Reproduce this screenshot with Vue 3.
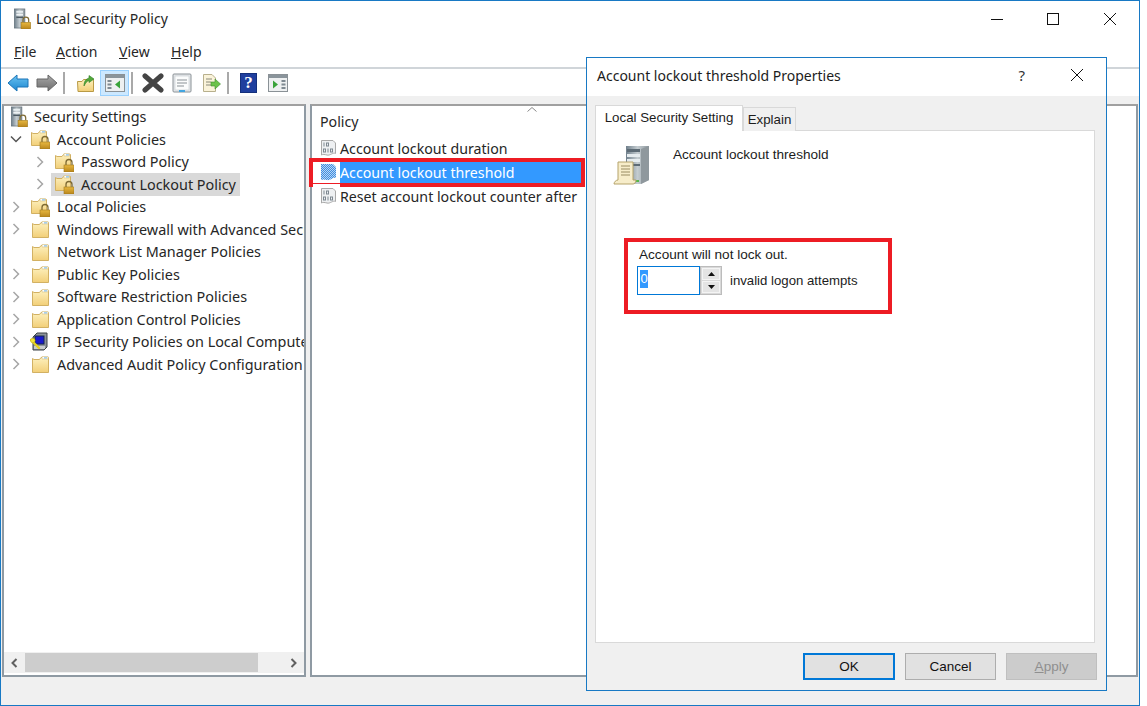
<script setup>
const tree = [
  { label: 'Security Settings', lv: 0, icon: 'i-server-lock' },
  { label: 'Account Policies', lv: 1, icon: 'i-folder-lock', chev: 'open' },
  { label: 'Password Policy', lv: 2, icon: 'i-folder-lock', chev: 'closed' },
  { label: 'Account Lockout Policy', lv: 2, icon: 'i-folder-lock', chev: 'closed', selected: true },
  { label: 'Local Policies', lv: 1, icon: 'i-folder-lock', chev: 'closed' },
  { label: 'Windows Firewall with Advanced Security', lv: 1, icon: 'i-folder', chev: 'closed' },
  { label: 'Network List Manager Policies', lv: 1, icon: 'i-folder' },
  { label: 'Public Key Policies', lv: 1, icon: 'i-folder', chev: 'closed' },
  { label: 'Software Restriction Policies', lv: 1, icon: 'i-folder', chev: 'closed' },
  { label: 'Application Control Policies', lv: 1, icon: 'i-folder', chev: 'closed' },
  { label: 'IP Security Policies on Local Computer', lv: 1, icon: 'i-ipsec', chev: 'closed' },
  { label: 'Advanced Audit Policy Configuration', lv: 1, icon: 'i-folder', chev: 'closed' }
]
const policies = [
  { label: 'Account lockout duration' },
  { label: 'Account lockout threshold', selected: true },
  { label: 'Reset account lockout counter after' }
]
const menus = [
  { key: 'F', rest: 'ile' },
  { key: 'A', rest: 'ction' },
  { key: 'V', rest: 'iew' },
  { key: 'H', rest: 'elp' }
]
</script>

<template>
  <div class="screen">
    <svg class="defs" aria-hidden="true">
      <defs>
        <linearGradient id="g-folder" x1="0" y1="0" x2="0" y2="1">
          <stop offset="0" stop-color="#fdf0bd" />
          <stop offset="1" stop-color="#f2cf78" />
        </linearGradient>
        <linearGradient id="g-lock" x1="0" y1="0" x2="0" y2="1">
          <stop offset="0" stop-color="#e8b840" />
          <stop offset="1" stop-color="#b9861c" />
        </linearGradient>
        <linearGradient id="g-tower" x1="0" y1="0" x2="1" y2="0">
          <stop offset="0" stop-color="#70808c" />
          <stop offset="0.5" stop-color="#c4ccd0" />
          <stop offset="1" stop-color="#8d979d" />
        </linearGradient>
        <linearGradient id="g-back" x1="0" y1="0" x2="0" y2="1">
          <stop offset="0" stop-color="#6cc4f2" />
          <stop offset="1" stop-color="#1b86d0" />
        </linearGradient>
        <linearGradient id="g-fwd" x1="0" y1="0" x2="0" y2="1">
          <stop offset="0" stop-color="#a8a8a8" />
          <stop offset="1" stop-color="#6e6e6e" />
        </linearGradient>
        <pattern id="p-dither" width="2" height="2" patternUnits="userSpaceOnUse">
          <rect width="2" height="2" fill="#b9d6f5" />
          <rect width="1" height="1" fill="#3f8ee0" />
          <rect x="1" y="1" width="1" height="1" fill="#3f8ee0" />
        </pattern>
        <symbol id="i-folder" viewBox="0 0 20 20">
          <path d="M2.500 4.500V18.500H18.500V3.500H11L9.500 5.500H4L2.500 4.500Z" fill="url(#g-folder)" stroke="#d2b163" />
          <path d="M12 2.500H18V5H12Z" fill="#fff" stroke="#d8c48a" stroke-width=".7" />
          <path d="M14 3.500H17V4.300H14Z" fill="#4d9fd8" />
        </symbol>
        <symbol id="i-folder-lock" viewBox="0 0 20 20">
          <path d="M1.500 3.500V16.500H16.500V2.500H9.500L8 4.500H3L1.500 3.500Z" fill="url(#g-folder)" stroke="#d2b163" />
          <path d="M10 1.500H15.500V4H10Z" fill="#fff" stroke="#d8c48a" stroke-width=".7" />
          <path d="M12 2.500H15V3.300H12Z" fill="#4d9fd8" />
          <path d="M12 13V10.500A3 3 0 0 1 18 10.500V13" fill="none" stroke="#7e6a33" stroke-width="1.300" />
          <rect x="10" y="13" width="10" height="7" fill="url(#g-lock)" stroke="#a07a1e" stroke-width=".6" />
        </symbol>
        <symbol id="i-server-lock" viewBox="0 0 19 22">
          <rect x="1" y="1" width="11" height="20" fill="url(#g-tower)" stroke="#5b6a75" stroke-width=".7" />
          <rect x="3" y="3" width="7" height="2" fill="#e8eef1" />
          <rect x="3" y="6" width="7" height="2" fill="#eef2f4" />
          <rect x="3" y="9" width="7" height="1.500" fill="#4d5a63" />
          <path d="M10 15V12.500A3 3 0 0 1 16 12.500V15" fill="none" stroke="#7e6a33" stroke-width="1.300" />
          <rect x="8" y="15" width="10" height="7" fill="url(#g-lock)" stroke="#a07a1e" stroke-width=".6" />
        </symbol>
        <symbol id="i-ipsec" viewBox="0 0 20 20">
          <path d="M3 5L7 1H17V15L14 18H3Z" fill="#8d9499" stroke="#3d4347" />
          <rect x="5" y="4" width="9" height="8" fill="#1a1acc" stroke="#16264a" />
          <rect x="4" y="14" width="11" height="3" fill="#c8ccce" />
          <path d="M1 8L9 16" stroke="#e6d21e" stroke-width="2.400" stroke-linecap="round" />
          <circle cx="2.800" cy="8.500" r="2.300" fill="#f1e23a" stroke="#b7a40f" stroke-width=".5" />
        </symbol>
        <symbol id="i-policy" viewBox="0 0 17 18">
          <path d="M1.500 1.500H13L15.500 4V14.500C13 13 10 17 7 16C4.500 15.500 3 15 1.500 16Z" fill="#eef0f2" stroke="#a9a9a9" />
          <g fill="#7d8790">
            <rect x="3.500" y="3.500" width="1" height="4" /><rect x="6" y="3.500" width="3" height="4" />
            <rect x="3" y="9.500" width="3" height="4" /><rect x="7.500" y="9.500" width="1" height="4" /><rect x="10" y="9.500" width="3" height="4" />
          </g>
          <rect x="7" y="4.500" width="1" height="2" fill="#eef0f2" />
          <rect x="4" y="10.500" width="1" height="2" fill="#eef0f2" />
          <rect x="11" y="10.500" width="1" height="2" fill="#eef0f2" />
        </symbol>
        <symbol id="i-policy-sel" viewBox="0 0 17 18">
          <path d="M1 1H13L16 4V15C13 14 10 18 7 17C4.500 16.500 3 16 1 17Z" fill="url(#p-dither)" />
        </symbol>
      </defs>
    </svg>

    <div class="window">
      <header class="titlebar">
        <svg class="app-icon"><use href="#i-server-lock" /></svg>
        <span class="app-title">Local Security Policy</span>
        <div class="caption">
          <svg class="cap-btn" viewBox="0 0 12 12"><path d="M0 6.500H12" stroke="#111" fill="none" /></svg>
          <svg class="cap-btn" viewBox="0 0 12 12"><rect x=".5" y=".5" width="11" height="11" stroke="#111" fill="none" /></svg>
          <svg class="cap-btn" viewBox="0 0 12 12"><path d="M0 0L12 12M12 0L0 12" stroke="#111" fill="none" /></svg>
        </div>
      </header>

      <nav class="menubar">
        <span v-for="m in menus" :key="m.key" class="menu"><u>{{ m.key }}</u>{{ m.rest }}</span>
      </nav>

      <div class="toolbar">
        <span class="tool">
          <svg width="22" height="20" viewBox="0 0 22 20"><path d="M1 10L10 2V6H21V14H10V18Z" fill="url(#g-back)" stroke="#1a75b8" /></svg>
        </span>
        <span class="tool">
          <svg width="22" height="20" viewBox="0 0 22 20"><path d="M21 10L12 2V6H1V14H12V18Z" fill="url(#g-fwd)" stroke="#666" /></svg>
        </span>
        <span class="sep wide"></span>
        <span class="tool">
          <svg width="20" height="20" viewBox="0 0 20 20">
            <path d="M1.500 8.500H6L7.500 6.500H17.500V18.500H2Z" fill="url(#g-folder)" stroke="#b99a45" />
            <path d="M8 13C8 8 10 6 13 5V2.500L18 6L13 9.500V7.500C11 8 9.500 10 8 13Z" fill="#52a83b" stroke="#2f7d24" stroke-width=".6" />
          </svg>
        </span>
        <span class="tool active">
          <svg width="20" height="18" viewBox="0 0 20 18">
            <rect x=".5" y=".5" width="19" height="17" fill="#eef0f1" stroke="#8a9196" />
            <rect x="1" y="1" width="18" height="3" fill="#8a949b" />
            <rect x="2.500" y="6" width="4" height="2" fill="#7f8a92" /><rect x="2.500" y="9.500" width="4" height="2" fill="#7f8a92" /><rect x="2.500" y="13" width="4" height="2" fill="#7f8a92" />
            <path d="M15 6.500V14.500L10 10.500Z" fill="#3aa33a" />
          </svg>
        </span>
        <span class="sep"></span>
        <span class="tool">
          <svg width="22" height="20" viewBox="0 0 22 20"><path d="M3 3L19 17M19 3L3 17" stroke="#444" stroke-width="5" stroke-linecap="round" /></svg>
        </span>
        <span class="tool">
          <svg width="20" height="20" viewBox="0 0 20 20">
            <rect x="1" y="1" width="18" height="18" rx="1" fill="#e6e9eb" stroke="#8a9196" />
            <rect x="3" y="3" width="14" height="14" fill="#fbfcfc" stroke="#c2c8cc" stroke-width=".6" />
            <path d="M5 7H15M5 10H15M5 13H12" stroke="#8a9196" />
            <rect x="7" y="17" width="6" height="2" fill="#43a5e0" />
          </svg>
        </span>
        <span class="tool">
          <svg width="20" height="20" viewBox="0 0 20 20">
            <path d="M2.500 1.500H11L14.500 5V18.500H2.500Z" fill="#faf3da" stroke="#b8b08d" />
            <path d="M5 6H11M5 9H10M5 12H10" stroke="#8a8a7a" />
            <path d="M10 9H14V6L19.500 11L14 16V13H10Z" fill="#6cc24a" stroke="#3f8f2b" stroke-width=".6" />
          </svg>
        </span>
        <span class="sep"></span>
        <span class="tool">
          <span class="help">?</span>
        </span>
        <span class="tool">
          <svg width="20" height="18" viewBox="0 0 20 18">
            <rect x=".5" y=".5" width="19" height="17" fill="#eef0f1" stroke="#8a9196" />
            <rect x="1" y="1" width="18" height="3" fill="#8a949b" />
            <rect x="13.500" y="6" width="4" height="2" fill="#7f8a92" /><rect x="13.500" y="9.500" width="4" height="2" fill="#7f8a92" /><rect x="13.500" y="13" width="4" height="2" fill="#7f8a92" />
            <path d="M5 6.500V14.500L10 10.500Z" fill="#3aa33a" />
          </svg>
        </span>
      </div>

      <main class="panes">
        <section class="pane tree-pane">
          <div class="tree">
            <div v-for="t in tree" :key="t.label" class="row" :class="'lv' + t.lv">
              <svg v-if="t.lv" class="chev" :class="{ none: !t.chev }" viewBox="0 0 12 12">
                <path v-if="t.chev === 'open'" d="M1 3.500L6 8.500L11 3.500" fill="none" stroke="#555" stroke-width="1.500" />
                <path v-else-if="t.chev" d="M3.500 1L8.500 6L3.500 11" fill="none" stroke="#a6a6a6" stroke-width="1.500" />
              </svg>
              <div class="item" :class="{ selected: t.selected }">
                <svg class="tree-icon"><use :href="'#' + t.icon" /></svg>
                <span class="label">{{ t.label }}</span>
              </div>
            </div>
          </div>
          <div class="hscroll">
            <svg class="arrow" viewBox="0 0 10 10"><path d="M7 1L3 5L7 9" fill="none" stroke="#606060" stroke-width="2" /></svg>
            <div class="track"><div class="thumb"></div></div>
            <svg class="arrow" viewBox="0 0 10 10"><path d="M3 1L7 5L3 9" fill="none" stroke="#606060" stroke-width="2" /></svg>
          </div>
        </section>

        <section class="pane list-pane">
          <div class="list-head">
            <span>Policy</span>
            <svg class="sort" viewBox="0 0 10 5"><path d="M.5 4.500L5 .5L9.500 4.500" fill="none" stroke="#8a8a8a" /></svg>
          </div>
          <div v-for="p in policies" :key="p.label" class="policy" :class="{ selected: p.selected }">
            <span class="policy-slot"><svg class="policy-icon"><use :href="p.selected ? '#i-policy-sel' : '#i-policy'" /></svg></span>
            <span class="policy-label">{{ p.label }}</span>
            <i v-if="p.selected" class="mark mark-row"></i>
          </div>
        </section>
      </main>

      <footer class="statusbar"></footer>

      <div class="dialog">
        <div class="dlg-title">
          <span class="dlg-name">Account lockout threshold Properties</span>
          <span class="dlg-help">?</span>
          <svg class="dlg-close" viewBox="0 0 12 12"><path d="M0 0L12 12M12 0L0 12" stroke="#111" fill="none" /></svg>
        </div>
        <div class="dlg-body">
          <div class="tabs">
            <span class="tab on">Local Security Setting</span>
            <span class="tab">Explain</span>
          </div>
          <div class="tab-panel">
            <div class="setting-head">
              <svg class="server" width="38" height="42" viewBox="0 0 38 42">
                <path d="M13 1H36V35L28 39H13Z" fill="url(#g-tower)" />
                <path d="M28 4L36 1V35L28 39Z" fill="#8f989d" />
                <rect x="14" y="4" width="13" height="3" fill="#5d6b75" />
                <rect x="14" y="9" width="13" height="3" fill="#e6ecef" />
                <rect x="14" y="14" width="13" height="3" fill="#e6ecef" />
                <rect x="14" y="19" width="13" height="2" fill="#5d6b75" />
                <rect x="22" y="35" width="4" height="2" fill="#54b848" />
                <path d="M5 17H20V35H23C23 38 21 39 20 39H1C1 37 3 35 5 35Z" fill="#f7edca" stroke="#b5a36b" />
                <path d="M8 21H17M8 24H17M8 27H17M8 30H17" stroke="#998c63" />
              </svg>
              <span class="setting-name">Account lockout threshold</span>
            </div>
            <div class="setting">
              <div class="setting-note">Account will not lock out.</div>
              <div class="setting-row">
                <div class="spin-input"><span class="spin-value">0</span></div>
                <div class="spin">
                  <span class="spin-btn"><svg width="7" height="4" viewBox="0 0 7 4"><path d="M3.500 0L7 4H0Z" fill="#111" /></svg></span>
                  <span class="spin-btn"><svg width="7" height="4" viewBox="0 0 7 4"><path d="M3.500 4L7 0H0Z" fill="#111" /></svg></span>
                </div>
                <span class="setting-unit">invalid logon attempts</span>
              </div>
              <i class="mark mark-setting"></i>
            </div>
          </div>
          <div class="dlg-actions">
            <button class="btn default">OK</button>
            <button class="btn">Cancel</button>
            <button class="btn disabled"><u>A</u>pply</button>
          </div>
        </div>
      </div>
    </div>
  </div>
</template>

<style>
html, body { margin: 0; background: #fff; }
</style>

<style scoped>
.screen { width: 1147px; height: 706px; overflow: hidden; background: #fff; font-family: "Noto Sans", sans-serif; color: #262626; }
.defs { position: absolute; width: 0; height: 0; }
.window { position: relative; width: 1140px; height: 706px; box-sizing: border-box; border: 1px solid #1879c4; display: flex; flex-direction: column; background: #f0f0f0; }

.titlebar { height: 39px; background: #fff; display: flex; align-items: center; padding: 0 0 4px 12px; box-sizing: border-box; flex: none; }
.app-icon { width: 19px; height: 21px; margin-right: 4px; }
.app-title { font-size: 14px; }
.caption { margin-left: auto; display: flex; gap: 45px; padding-right: 23px; padding-top: 1px; }
.cap-btn { width: 12px; height: 12px; }
.cap-btn:first-child { margin-right: -1px; }

.menubar { height: 23px; background: #fff; display: flex; align-items: center; padding: 0 0 4px 13px; flex: none; border-bottom: 2px solid #d0d5d9; box-sizing: content-box; font-size: 14px; }
.menu:nth-child(1) { width: 42px; }
.menu:nth-child(2) { width: 63px; }
.menu:nth-child(3) { width: 52px; }

.toolbar { height: 27px; background: #fff; display: flex; align-items: center; padding-left: 2px; flex: none; }
.tool { width: 29px; height: 26px; display: flex; align-items: center; justify-content: center; box-sizing: border-box; }
.tool.active { background: #cce8ff; border: 1px solid #99d1ff; }
.sep { width: 9px; height: 22px; box-sizing: border-box; border-left: 2px solid #a9a9a9; margin-left: 2px; margin-right: -2px; }
.sep.wide { width: 10px; }
.help { width: 17px; height: 20px; background: #1f3f9e; border: 1px solid #14307c; box-sizing: border-box; color: #fff; font: bold 17px/18px "Liberation Serif", serif; text-align: center; }

.panes { flex: 1; display: flex; gap: 4px; padding: 8px 1px 0 1px; min-height: 0; background: #f0f0f0; }
.pane { background: #fff; border: 2px solid; border-color: #a0a0a0 #8f9aa3 #8f9aa3 #8f9aa3; box-sizing: border-box; display: flex; flex-direction: column; min-width: 0; }
.tree-pane { width: 304px; }
.list-pane { flex: 1; position: relative; padding-top: 3px; }

.tree { flex: 1; overflow: hidden; font-size: 14.4px; }
.row { height: 22.5px; display: flex; align-items: center; white-space: nowrap; position: relative; top: -0.5px; }
.lv0 { padding-left: 3px; }
.lv1 { padding-left: 6px; }
.lv2 { padding-left: 30px; }
.chev { width: 12px; height: 12px; flex: none; margin-right: 5px; }
.item { display: flex; align-items: center; height: 22.5px; padding: 0 4px 0 3px; }
.item.selected { background: #d9d9d9; }
.tree-icon { width: 20px; height: 20px; flex: none; margin-right: 7px; }
.lv0 .tree-icon { width: 19px; height: 21px; margin-right: 5px; }

.hscroll { height: 21px; background: #f0f0f0; display: flex; align-items: center; flex: none; padding: 0 2px; margin-bottom: 2px; }
.arrow { width: 17px; height: 10px; flex: none; }
.track { flex: 1; height: 19px; padding-left: 2px; }
.thumb { width: 233px; height: 19px; background: #cdcdcd; }

.list-head { height: 25px; padding: 0 0 2px 8px; display: flex; align-items: center; font-size: 14.2px; position: relative; }
.sort { position: absolute; left: 215px; top: -2px; width: 10px; height: 5px; }
.policy { position: relative; height: 24px; display: flex; align-items: center; width: 268px; margin-left: 1px; font-size: 14.2px; white-space: nowrap; }
.policy.selected { background: #3399ff; color: #fff; }
.policy-slot { align-self: stretch; width: 27px; flex: none; background: #fff; display: flex; align-items: center; justify-content: flex-end; box-sizing: border-box; padding-right: 3px; }
.policy-icon { width: 17px; height: 18px; }

.statusbar { height: 28px; flex: none; background: #f0f0f0; }

.mark { position: absolute; border: 4px solid #ed1c24; box-sizing: border-box; display: block; pointer-events: none; }
.mark-row { left: -4px; right: -4px; top: -2px; bottom: -3px; }
.mark-setting { left: -15px; top: -9px; width: 268px; height: 76px; }

.dialog { position: absolute; left: 585px; top: 56px; width: 521px; height: 634px; box-sizing: border-box; border: 1px solid #1879c4; background: #f0f0f0; display: flex; flex-direction: column; font-family: "Liberation Sans", sans-serif; font-size: 13.6px; color: #1c1c1c; }
.dlg-title { height: 38px; background: #fff; flex: none; display: flex; align-items: center; padding: 0 0 4px 10px; box-sizing: border-box; font-family: "Noto Sans", sans-serif; font-size: 14px; }
.dlg-help { margin-left: auto; margin-right: 46px; font-size: 15px; color: #333; }
.dlg-close { width: 12px; height: 12px; margin-right: 23px; }
.dlg-body { flex: 1; min-height: 0; padding: 9px 11px 0 8px; display: flex; flex-direction: column; }
.tabs { display: flex; align-items: flex-end; height: 26px; flex: none; position: relative; z-index: 1; margin-bottom: -1px; font-size: 13.3px; }
.tab { height: 24px; width: 53px; display: flex; align-items: center; justify-content: center; background: #f0f0f0; border: 1px solid #d9d9d9; border-bottom: 0; box-sizing: border-box; }
.tab.on { height: 26px; width: 148px; background: #fff; padding-bottom: 2px; }
.tab-panel { height: 513px; flex: none; background: #fff; border: 1px solid #d9d9d9; box-sizing: border-box; padding: 14px 17px 0; }
.setting-head { display: flex; align-items: flex-start; }
.server { flex: none; margin-right: 22px; }
.setting-name { padding-top: 2px; }
.setting { position: relative; margin: 60px 0 0 26px; width: 240px; }
.setting-note { height: 19px; line-height: 16px; white-space: nowrap; }
.setting-row { display: flex; align-items: center; height: 29px; margin-left: -2px; }
.spin-input { width: 63px; height: 29px; background: #fff; border: 1px solid #0078d7; box-sizing: border-box; padding: 3px 2px; }
.spin-value { display: block; width: 8px; height: 18px; background: #3399ff; color: #fff; line-height: 18px; font-size: 13px; text-align: center; }
.spin { width: 22px; height: 29px; background: #d9d9d9; border: 1px solid #bcbcbc; box-sizing: border-box; display: flex; flex-direction: column; gap: 1px; padding: 1px 0 1px 1px; }
.spin-btn { flex: 1; background: #e4e4e4; margin-right: 1px; display: flex; align-items: center; justify-content: center; border: 1px solid #f4f4f4; box-sizing: border-box; }
.setting-unit { margin-left: 8px; white-space: nowrap; font-size: 13.2px; }
.dlg-actions { display: flex; gap: 10px; padding: 10px 0 0 208px; }
.btn { flex: none; width: 91px; height: 27px; background: #e1e1e1; border: 1px solid #adadad; box-sizing: border-box; font-family: "Liberation Sans", sans-serif; font-size: 13.5px; color: #111; padding: 0; }
.btn.default { width: 92px; border: 2px solid #0078d7; }
.btn.disabled { background: #cccccc; border-color: #bfbfbf; color: #8f8f8f; }
</style>
